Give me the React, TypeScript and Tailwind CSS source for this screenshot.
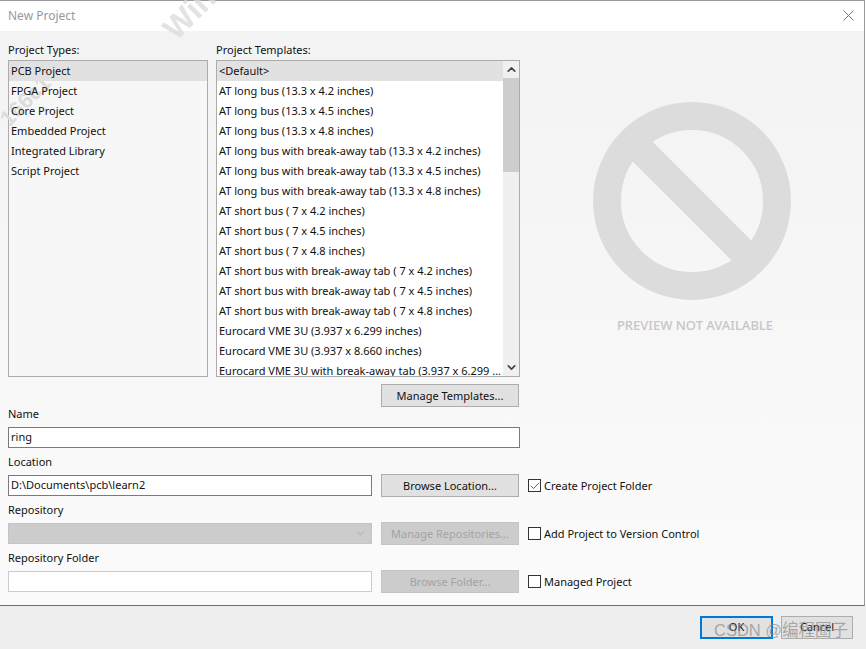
import { ChevronDown, ChevronUp, Check } from 'lucide-react';

const projectTypes = ['PCB Project', 'FPGA Project', 'Core Project', 'Embedded Project', 'Integrated Library', 'Script Project'];

const templates = [
  '<Default>',
  'AT long bus (13.3 x 4.2 inches)',
  'AT long bus (13.3 x 4.5 inches)',
  'AT long bus (13.3 x 4.8 inches)',
  'AT long bus with break-away tab (13.3 x 4.2 inches)',
  'AT long bus with break-away tab (13.3 x 4.5 inches)',
  'AT long bus with break-away tab (13.3 x 4.8 inches)',
  'AT short bus ( 7 x 4.2 inches)',
  'AT short bus ( 7 x 4.5 inches)',
  'AT short bus ( 7 x 4.8 inches)',
  'AT short bus with break-away tab ( 7 x 4.2 inches)',
  'AT short bus with break-away tab ( 7 x 4.5 inches)',
  'AT short bus with break-away tab ( 7 x 4.8 inches)',
  'Eurocard VME 3U (3.937 x 6.299 inches)',
  'Eurocard VME 3U (3.937 x 8.660 inches)',
  'Eurocard VME 3U with break-away tab (3.937 x 6.299 ...',
];

function ListRow({ label, selected }: { label: string; selected: boolean }) {
  return (
    <div className={`relative h-5 shrink-0 px-[2px] leading-5 whitespace-nowrap ${selected ? 'bg-[#e1e1e1]' : ''}`}>{label}</div>
  );
}

function Btn({ label, disabled }: { label: string; disabled?: boolean }) {
  return (
    <div
      className={`flex h-[23px] w-[138px] shrink-0 items-center justify-center border pt-[1px] whitespace-nowrap ${
        disabled ? 'border-[#c4c4c4] bg-[#cccccc] text-[#a3a3a3]' : 'border-[#adadad] bg-[#e1e1e1] text-[#111]'
      }`}
    >
      {label}
    </div>
  );
}

function CheckRow({ label, checked }: { label: string; checked?: boolean }) {
  return (
    <div className="ml-[9px] flex shrink-0 items-center gap-[3px] whitespace-nowrap">
      <span className="flex h-[13px] w-[13px] items-center justify-center border border-[#333] bg-white">
        {checked && <Check className="h-[12px] w-[12px] shrink-0 text-[#333]" strokeWidth={1.5} />}
      </span>
      <span className="mt-[1px]">{label}</span>
    </div>
  );
}

export default function App() {
  return (
    <div className="relative flex h-[649px] w-[866px] flex-col overflow-hidden bg-white font-['Noto_Sans','Liberation_Sans',sans-serif] text-[11px] text-[#111]">
      <div className="mr-[1px] flex h-[606px] flex-col border-t border-r border-b border-[#9a9a9a] border-b-[#6e6e6e]">
        {/* title bar */}
        <div className="flex h-[30px] shrink-0 items-center justify-between bg-white pr-[10px] pl-2">
          <span className="text-[12px] text-[#9a9a9a]">New Project</span>
          <svg width="11" height="11" viewBox="0 0 11 11" className="-mt-[1px]">
            <path d="M0.5 0.5 L10.5 10.5 M10.5 0.5 L0.5 10.5" stroke="#777" strokeWidth="1" fill="none" />
          </svg>
        </div>

        <div className="flex flex-1 bg-gradient-to-b from-[#f3f3f3] to-[#fbfbfb]">
          {/* form */}
          <div className="w-[520px] shrink-0 pl-2">
            <div className="flex gap-2 pt-[11px]">
              <div className="w-[200px]">
                <div className="h-[18px] leading-4">Project Types:</div>
                <div className="relative h-[317px] border border-[#acacac] bg-[#f7f7f7]">
                  <div className="pointer-events-none absolute top-[28px] left-[-14px] -rotate-45 font-['Liberation_Sans',sans-serif] text-[22px] leading-[24px] font-bold whitespace-nowrap text-[#dcdcdc]">
                    166c1
                  </div>
                  {projectTypes.map((t, i) => (
                    <ListRow key={t} label={t} selected={i === 0} />
                  ))}
                </div>
              </div>
              <div className="w-[304px]">
                <div className="h-[18px] leading-4">Project Templates:</div>
                <div className="flex h-[317px] border border-[#acacac] bg-white">
                  <div className="min-w-0 flex-1 overflow-hidden">
                    {templates.map((t, i) => (
                      <ListRow key={t} label={t} selected={i === 0} />
                    ))}
                  </div>
                  <div className="flex w-[16px] shrink-0 flex-col items-center bg-[#f0f0f0]">
                    <ChevronUp className="mt-[2px] h-[13px] w-[13px] text-[#444]" strokeWidth={3} />
                    <div className="mt-[2px] h-[94px] w-full bg-[#cdcdcd]" />
                    <ChevronDown className="mt-auto mb-[2px] h-[13px] w-[13px] text-[#444]" strokeWidth={3} />
                  </div>
                </div>
              </div>
            </div>

            <div className="mt-[7px] flex justify-end pr-[1px]">
              <Btn label="Manage Templates..." />
            </div>

            <div className="h-[20px] leading-[14px]">Name</div>
            <div className="h-[21px] w-[512px] border border-[#7a7a7a] bg-white px-[2px] leading-[17px]">ring</div>

            <div className="mt-[6px] h-[20px] leading-4">Location</div>
            <div className="flex w-[720px] items-center">
              <div className="h-[21px] w-[364px] shrink-0 border border-[#7a7a7a] bg-white px-[2px] leading-[18px]">D:\Documents\pcb\learn2</div>
              <div className="ml-[9px]">
                <Btn label="Browse Location..." />
              </div>
              <CheckRow label="Create Project Folder" checked />
            </div>

            <div className="mt-[5px] h-[20px] leading-4">Repository</div>
            <div className="flex w-[720px] items-center">
              <div className="flex h-[21px] w-[364px] shrink-0 items-center justify-end border border-[#c4c4c4] bg-[#cccccc] pr-1">
                <ChevronDown className="h-[13px] w-[13px] text-[#a8a8a8]" strokeWidth={1.5} />
              </div>
              <div className="ml-[9px]">
                <Btn label="Manage Repositories..." disabled />
              </div>
              <CheckRow label="Add Project to Version Control" />
            </div>

            <div className="mt-[5px] h-[20px] leading-4">Repository Folder</div>
            <div className="flex w-[720px] items-center">
              <div className="h-[21px] w-[364px] shrink-0 border border-[#cccccc] bg-white" />
              <div className="ml-[9px]">
                <Btn label="Browse Folder..." disabled />
              </div>
              <CheckRow label="Managed Project" />
            </div>
          </div>

          {/* preview */}
          <div className="flex flex-1 flex-col items-center pt-[71px]">
            <svg width="198" height="198" viewBox="0 0 198 198">
              <circle cx="99" cy="99" r="85" fill="none" stroke="#dcdcdc" strokeWidth="28" />
              <path d="M39 39 L159 159" stroke="#dcdcdc" strokeWidth="28" />
            </svg>
            <div className="mt-[16px] ml-[6px] text-[13px] font-medium whitespace-nowrap text-[#c6c6c6]">PREVIEW NOT AVAILABLE</div>
          </div>
        </div>
      </div>

      {/* footer */}
      <div className="flex flex-1 items-start justify-end gap-2 bg-[#eeeeee] pt-[10px] pr-[13px]">
        <div className="flex h-[23px] w-[73px] items-center justify-center border-2 border-[#0078d7] bg-[#e1e1e1]">OK</div>
        <div className="flex h-[23px] w-[72px] items-center justify-center border border-[#adadad] bg-[#e1e1e1]">Cancel</div>
      </div>

      {/* watermarks */}
      <div className="pointer-events-none absolute top-[618px] left-[714px] font-['Liberation_Sans','Noto_Sans_CJK_SC',sans-serif] text-[16.5px] leading-[24px] whitespace-nowrap text-[#8a8a8a]/70">
        CSDN @编程圈子
      </div>
      <div className="pointer-events-none absolute top-[-7px] left-[160px] -rotate-45 font-['Liberation_Sans',sans-serif] text-[32px] leading-[40px] font-bold text-[#dcdcdc]/80">
        Win
      </div>
    </div>
  );
}
